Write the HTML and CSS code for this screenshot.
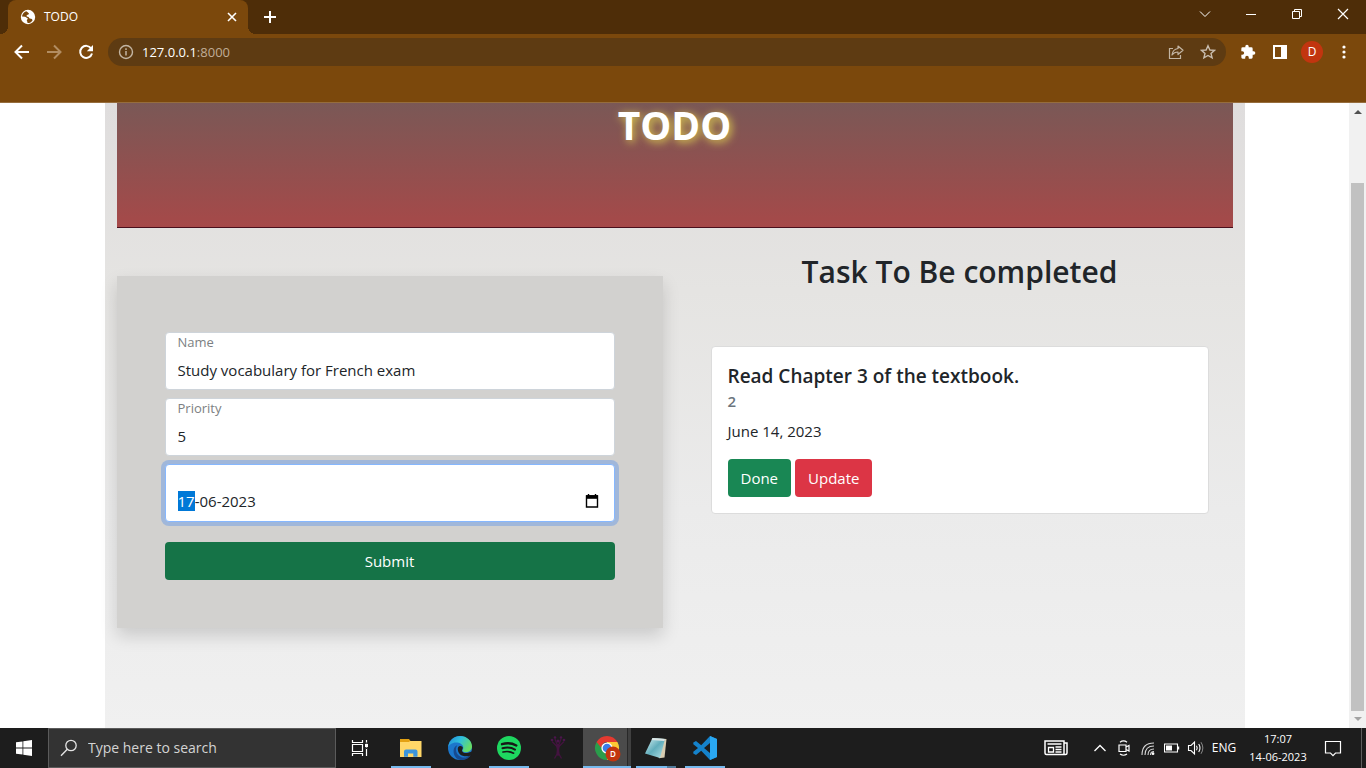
FILE: index.html
```html
<!DOCTYPE html>
<html lang="en">
<head>
<meta charset="utf-8">
<title>TODO</title>
<link rel="stylesheet" href="styles.css">
</head>
<body>
<header class="browser">
  <div class="tabstrip">
    <div class="tab">
      <svg class="tab-icon" width="16" height="16" viewBox="0 0 16 16"><circle cx="8" cy="8" r="7.2" fill="#fff"/><path d="M6.2 2.2C4 3 2.300 5 2 7.500l3 .3c1 .1 1.300 1 2.200 1.200.8.1.6 1.200 0 1.600-.6.5-.4 1.600.2 2.200L7.500 14c2 .1 4-1 5-2.600l-.5-1.500-2.200-.5c-.9-.2-.8-1.200-1.400-1.500-.6-.4-1.800-.1-1.800-1 0-.8.8-1.200 1.600-1.300 1-.1.8-1 .4-1.500-.5-.5-1.200-1.100-2.400-1.900z" fill="#7b480c"/><path d="M9 2.500l1.500 2.200 1.700.8.6-.8C12 3.500 10.500 2.600 9 2.500z" fill="#fff"/></svg>
      <span class="tab-title">TODO</span>
      <button class="tab-close" aria-label="Close tab"><svg width="10" height="10" viewBox="0 0 10 10"><path d="M1 1l8 8M9 1L1 9" stroke="#fff" stroke-width="1.600"/></svg></button>
    </div>
    <button class="new-tab" aria-label="New tab"><svg width="12" height="12" viewBox="0 0 12 12"><path d="M6 0v12M0 6h12" stroke="#fff" stroke-width="2"/></svg></button>
    <div class="window-controls">
      <button aria-label="Search tabs"><svg width="12" height="12" viewBox="0 0 12 12"><path d="M1 3.500l5 5 5-5" fill="none" stroke="#fff"/></svg></button>
      <button aria-label="Minimize"><svg width="12" height="12" viewBox="0 0 12 12"><path d="M1 6.500h10" stroke="#fff"/></svg></button>
      <button aria-label="Restore"><svg width="12" height="12" viewBox="0 0 12 12"><path d="M1.500 3.500h7v7h-7zM3.500 3.500v-2h7v7h-2" fill="none" stroke="#fff"/></svg></button>
      <button aria-label="Close"><svg width="12" height="12" viewBox="0 0 12 12"><path d="M1 1l10 10M11 1L1 11" stroke="#fff" stroke-width="1.200"/></svg></button>
    </div>
  </div>
  <div class="toolbar">
    <button class="tool" aria-label="Back"><svg width="16" height="16" viewBox="0 0 16 16"><path d="M15 8H2M8 1.500L1.500 8 8 14.500" fill="none" stroke="#fff" stroke-width="2"/></svg></button>
    <button class="tool" aria-label="Forward"><svg width="16" height="16" viewBox="0 0 16 16"><path d="M1 8h13M8 1.500L14.500 8 8 14.500" fill="none" stroke="#b28d62" stroke-width="2"/></svg></button>
    <button class="tool" aria-label="Reload"><svg width="16" height="16" viewBox="0 0 16 16"><path d="M13.200 4.500A6 6 0 1 0 14 9.500" fill="none" stroke="#fff" stroke-width="2"/><path d="M15 1v6.200H8.800z" fill="#fff"/></svg></button>
    <div class="omnibox">
      <svg width="16" height="16" viewBox="0 0 16 16"><circle cx="8" cy="8" r="6.500" fill="none" stroke="#c3b5a3" stroke-width="1.400"/><path d="M8 7v4.500M8 4.300v1.600" stroke="#c3b5a3" stroke-width="1.500"/></svg>
      <span class="url">127.0.0.1<span class="port">:8000</span></span>
      <button class="tool" aria-label="Share"><svg width="16" height="16" viewBox="0 0 16 16"><path d="M5 4.500H1.500v10h11V11" fill="none" stroke="#c3b5a3" stroke-width="1.200"/><path d="M10 2l5 4.300-5 4.200V8C7.500 8 5.500 8.800 4 11c.4-3.500 2.500-6 6-6.500z" fill="none" stroke="#c3b5a3" stroke-width="1.200" stroke-linejoin="round"/></svg></button>
      <button class="tool" aria-label="Bookmark"><svg width="16" height="16" viewBox="0 0 16 16"><path d="M8 1.800l1.900 4.200 4.600.4-3.500 3 1.100 4.500L8 11.500l-4.100 2.400L5 9.400l-3.500-3L6.100 6z" fill="none" stroke="#c9bdaf" stroke-width="1.400"/></svg></button>
    </div>
    <div class="actions">
      <button class="tool" aria-label="Extensions"><svg width="16" height="16" viewBox="0 0 24 24"><path d="M20.500 11H19V7a2 2 0 0 0-2-2h-4V3.500a2.500 2.500 0 0 0-5 0V5H4a2 2 0 0 0-2 2v3.800h1.500a2.700 2.700 0 0 1 0 5.400H2V20a2 2 0 0 0 2 2h3.800v-1.500a2.700 2.700 0 0 1 5.400 0V22H17a2 2 0 0 0 2-2v-4h1.500a2.500 2.500 0 0 0 0-5z" fill="#fff"/></svg></button>
      <button class="tool" aria-label="Side panel"><svg width="16" height="16" viewBox="0 0 16 16"><path d="M1 1h14v14H1zM3 3v10h6V3z" fill="#fff" fill-rule="evenodd"/></svg></button>
      <button class="tool" aria-label="Profile"><span class="avatar">D</span></button>
      <button class="tool" aria-label="Menu"><svg width="16" height="16" viewBox="0 0 16 16"><g fill="#fff"><circle cx="8" cy="3" r="1.600"/><circle cx="8" cy="8" r="1.600"/><circle cx="8" cy="13" r="1.600"/></g></svg></button>
    </div>
  </div>
  <div class="bookmarks"></div>
</header>

<div class="viewport">
  <main class="page">
    <div class="container">
      <div class="banner"><h1>TODO</h1></div>
      <div class="columns">
        <form class="task-form">
          <div class="field">
            <label for="name">Name</label>
            <input id="name" type="text" value="Study vocabulary for French exam">
          </div>
          <div class="field">
            <label for="priority">Priority</label>
            <input id="priority" type="text" value="5">
          </div>
          <div class="field field-active">
            <input id="date" type="text" value="17-06-2023" aria-label="Date">
            <button class="picker" type="button" aria-label="Show date picker"><svg width="16" height="16" viewBox="0 0 16 16"><path d="M4.500 1v2M11.500 1v2" stroke="#000" stroke-width="1.400"/><path d="M2.500 3h11v11h-11z" fill="none" stroke="#000" stroke-width="1.400"/><path d="M2 2.200h12v3.600H2z"/></svg></button>
          </div>
          <button class="btn btn-submit" type="submit">Submit</button>
        </form>
        <section class="tasks">
          <h2>Task To Be completed</h2>
          <article class="card">
            <h3>Read Chapter 3 of the textbook.</h3>
            <h4>2</h4>
            <p>June 14, 2023</p>
            <div class="card-actions">
              <button class="btn btn-done">Done</button>
              <button class="btn btn-update">Update</button>
            </div>
          </article>
        </section>
      </div>
    </div>
  </main>
  <div class="scrollbar">
    <svg width="17" height="17" viewBox="0 0 17 17"><path d="M5 11h8L9 7z" fill="#505050"/></svg>
    <div class="scroll-track"><div class="scroll-thumb"></div></div>
    <svg width="17" height="17" viewBox="0 0 17 17"><path d="M5 6h8L9 10z" fill="#a3a3a3"/></svg>
  </div>
</div>

<footer class="taskbar">
  <button class="start" aria-label="Start"><svg width="16" height="16" viewBox="0 0 16 16"><path d="M0 2.300L6.500 1.400v6.200H0zM7.300 1.200L16 0v7.600H7.300zM0 8.400h6.500v6.200L0 13.700zM7.300 8.400H16V16l-8.700-1.200z" fill="#fff"/></svg></button>
  <label class="search">
    <svg width="18" height="18" viewBox="0 0 18 18"><circle cx="11" cy="6.500" r="5.200" fill="none" stroke="#e4e4e4" stroke-width="1.300"/><path d="M7.300 10.200L1 16.800" stroke="#e4e4e4" stroke-width="1.400"/></svg>
    <input type="text" placeholder="Type here to search" aria-label="Search">
  </label>
  <button class="start" aria-label="Task view"><svg width="18" height="18" viewBox="0 0 18 18"><path d="M1.500 1v2.500h10V1M1.500 17v-2.500h10V17M1.500 5.500h10v7h-10zM15.500 1v16" fill="none" stroke="#fff" stroke-width="1.200"/><path d="M14 5h3v3h-3z" fill="#fff"/><path d="M15 3.500h1v1.200h-1zM15 8.500h1v1.500h-1z" fill="#1d1d1d"/></svg></button>
  <nav class="apps">
    <button class="app app-open" aria-label="File Explorer"><svg width="24" height="24" viewBox="0 0 24 24"><path d="M1 3h9l1.500 2H22v3H1z" fill="#e3a113"/><path d="M1 6h9l1-1h11.500v16H1z" fill="#ffd768"/><path d="M5 20.800v-5.300q0-2 2-2h9.500q2 0 2 2v5.300h-4.200v-3.400H9v3.400z" fill="#3b94dc"/></svg></button>
    <button class="app" aria-label="Edge"><svg width="24" height="24" viewBox="0 0 24 24"><defs><linearGradient id="eg" x1="0" y1="0" x2="1" y2=".5"><stop stop-color="#2388d8"/><stop offset=".5" stop-color="#2fc0dd"/><stop offset="1" stop-color="#67dd65"/></linearGradient></defs><circle cx="12" cy="12" r="12" fill="#1c77cc"/><path d="M.2 11C1 4.500 6 0 12.200 0 19 0 24 5 24 10.600c0 3.400-2.500 5.600-5.800 5.600-2.600 0-4-.8-3.700-2 .2-.7.8-1 .8-2.500C15.300 8.500 12 6.500 8 6.500 4 6.500 1 9 .2 11z" fill="url(#eg)"/><path d="M9.300 9.200c-2.300 3.300-1.500 8 1.700 10.500 3.500 2.600 7.500 2.400 10.400-.2.600-.5 1.200 0 .8.600-2 2.800-5.800 4.300-9.400 3.900C7.200 23.400 4.500 17 6 12.500c.6-1.700 1.800-2.700 3.300-3.300z" fill="#164b91"/><path d="M10 11.500c.7-1.600 3-2 4.300-.8 1.400 1.400-.6 3-.3 4.300.5 1.600 3 2.500 6.200 1.800l4.800-1.500-1.500 3.800c-3 1.800-9 1.700-11.600-.9-1.900-2-2.500-4.700-1.900-6.700z" fill="#1e1e1e"/></svg></button>
    <button class="app app-open" aria-label="Spotify"><svg width="24" height="24" viewBox="0 0 24 24"><circle cx="12" cy="12" r="12" fill="#1ed760"/><g fill="none" stroke="#171717" stroke-linecap="round"><path d="M5 8.200c5-1.500 10.500-.9 14.300 1.300" stroke-width="2.400"/><path d="M5.500 12.300c4.500-1.300 9-.7 12.500 1.300" stroke-width="2"/><path d="M6 16c4-1 7.500-.5 10.600 1.200" stroke-width="1.700"/></g></svg></button>
    <button class="app" aria-label="Family tree"><svg width="24" height="24" viewBox="0 0 24 24"><g fill="none" stroke="#43133f" stroke-width="1.300"><path d="M6 5.500l4.500 4.500q1.500 2 .5 8l-2.500 4.500M18 5.500L13.500 10q-1.500 2-.5 8l2.500 4.500M9 3l3 8 3-8M12 8v12"/></g><g fill="#4b154c"><circle cx="6" cy="4" r="1.300"/><circle cx="9" cy="1.500" r="1.300"/><circle cx="15" cy="1.500" r="1.300"/><circle cx="18" cy="4" r="1.300"/><circle cx="12" cy="5" r="1.500"/></g></svg></button>
    <button class="app app-current" aria-label="Chrome"><svg width="28" height="28" viewBox="0 0 28 28"><path d="M14 14L3.600 8A12 12 0 0 0 14 26l5-9z" fill="#2a9d4b"/><path d="M14 14l5 3-5 9A12 12 0 0 0 24.400 8H14z" fill="#fcc934"/><path d="M3.600 8A12 12 0 0 1 24.400 8H14c-3.500 0-5.500 2.700-5.600 6z" fill="#e53a30"/><circle cx="14" cy="14" r="5.600" fill="#fff"/><circle cx="14" cy="14" r="4.300" fill="#3b7de9"/><circle cx="20" cy="20" r="7.500" fill="#c2350f"/><text x="20" y="23" text-anchor="middle" class="badge-text">D</text></svg></button>
    <button class="app app-open app-stack" aria-label="Notepad"><svg width="24" height="24" viewBox="0 0 24 24"><defs><linearGradient id="ng" x1="0" y1="0" x2="1" y2="1"><stop stop-color="#d8f1f3"/><stop offset=".5" stop-color="#62aebc"/><stop offset="1" stop-color="#b5e3e8"/></linearGradient></defs><path d="M9 2l13.500 1-2 18.500-5.500.8z" fill="#d8cdb2"/><path d="M8.500 2l12.500 1-5 19L1 17.500z" fill="url(#ng)"/><path d="M8.500 2l12.500 1-.6 2L7.600 4z" fill="#dce5e6"/></svg></button>
    <button class="app app-open" aria-label="Visual Studio Code"><svg width="24" height="24" viewBox="0 0 24 24"><path d="M17 0l7 3v18l-7 3-8.800-9.200L3 19l-2.700-1.500v-1.700L5 12 .3 8.200V6.500L3 5l5.200 4.200zM17 7l-6 5 6 5z" fill="#1582cb" fill-rule="evenodd"/><path d="M17 0l7 3v18l-7 3z" fill="#2aa8f2"/></svg></button>
  </nav>
  <div class="tray">
    <button class="news" aria-label="News"><svg width="24" height="16" viewBox="0 0 24 16"><path d="M1 1h19v13.500H2.500Q1 14.500 1 13zM20 3h3v10q0 1.500-1.500 1.500H19" fill="none" stroke="#fff" stroke-width="1.500"/><path d="M3.500 4h14M11.500 7h6M11.500 9.500h6M11.500 12h6M4.500 7.500h5v4.500h-5z" fill="none" stroke="#fff" stroke-width="1.300"/></svg></button>
    <button class="tray-icon" aria-label="Show hidden icons"><svg width="14" height="14" viewBox="0 0 14 14"><path d="M1.500 10L7 4.500l5.500 5.500" fill="none" stroke="#fff" stroke-width="1.300"/></svg></button>
    <button class="tray-icon" aria-label="Meet Now"><svg width="16" height="16" viewBox="0 0 16 16"><path d="M3 5h7v6.500H3zM10 7l3-1.500v5.500l-3-1.500M4 2.200Q7.500-.5 11 2.200M4 14Q7.500 16.500 11 14" fill="none" stroke="#fff" stroke-width="1.200"/></svg></button>
    <button class="tray-icon" aria-label="Network"><svg width="16" height="16" viewBox="0 0 16 16"><g fill="none" stroke="#d8d8d8" stroke-width="1.100"><path d="M2 15Q2 3 14 3"/><path d="M5 15Q5 6 14 6"/><path d="M8 15Q8 9 14 9"/><path d="M10.500 15Q10.500 11.500 14 11.500"/></g><circle cx="13" cy="13.700" r="1.400" fill="#fff"/></svg></button>
    <button class="tray-icon" aria-label="Battery"><svg width="16" height="16" viewBox="0 0 16 16"><path d="M.5 4h13v8H.5z" fill="none" stroke="#fff" stroke-width="1.100"/><path d="M2 5.500h6v5H2zM14 6.500h1.200v3H14z" fill="#fff"/></svg></button>
    <button class="tray-icon" aria-label="Volume"><svg width="18" height="16" viewBox="0 0 18 16"><path d="M1.500 5.500h2.500l3.500-3.500v12L4 10.500H1.500z" fill="none" stroke="#fff" stroke-width="1.100"/><path d="M9.500 5.800q1.400 2.200 0 4.400M11.700 4q2.600 4 0 8" fill="none" stroke="#fff" stroke-width="1.100"/><path d="M14 2.200q3.700 5.800 0 11.600" fill="none" stroke="#8a8a8a"/></svg></button>
    <span class="lang">ENG</span>
    <div class="clock"><span>17:07</span><span>14-06-2023</span></div>
    <button class="notify" aria-label="Notifications"><svg width="18" height="18" viewBox="0 0 18 18"><path d="M1.500 2.500h15v11.500h-5l-2.500 2.700L6.500 14h-5z" fill="none" stroke="#fff" stroke-width="1.200"/></svg></button>
    <div class="peek"></div>
  </div>
</footer>
<script src="script.js"></script>
</body>
</html>
```
FILE: styles.css
```css
* { box-sizing: border-box; }

body {
  margin: 0;
  height: 100vh;
  display: flex;
  flex-direction: column;
  overflow: hidden;
  font-family: "Open Sans", "Noto Sans", sans-serif;
  font-size: 15px;
  line-height: 24px;
  color: #212529;
}

button, input { font: inherit; color: inherit; }
button { border: 0; padding: 0; background: none; }
svg { display: block; flex: none; }
h1, h2, h3, h4, p { margin: 0; }

/* Browser frame */
.browser {
  flex: none;
  background: #7b480c;
  border-bottom: 1px solid #966d3d;
  color: #fff;
  font-size: 12px;
}
.tabstrip {
  display: flex;
  height: 34px;
  padding-left: 8px;
  background: #4e2d08;
}
.tab {
  position: relative;
  display: flex;
  align-items: center;
  gap: 8px;
  width: 240px;
  padding: 0 11px 0 12px;
  background: #7b480c;
  border-radius: 8px 8px 0 0;
}
.tab::before, .tab::after {
  content: "";
  position: absolute;
  bottom: 0;
  width: 8px;
  height: 8px;
}
.tab::before { left: -8px; background: radial-gradient(circle at 0 0, #4e2d08 8px, #7b480c 8px); }
.tab::after { right: -8px; background: radial-gradient(circle at 100% 0, #4e2d08 8px, #7b480c 8px); }
.tab-title { flex: 1; }
.new-tab { width: 44px; display: grid; place-items: center; }
.window-controls { display: flex; margin-left: auto; }
.window-controls button { width: 46px; height: 28px; display: grid; place-items: center; }

.toolbar {
  display: flex;
  align-items: center;
  height: 36px;
  padding: 0 6px;
}
.tool { width: 32px; height: 28px; display: grid; place-items: center; }
.omnibox {
  flex: 1;
  display: flex;
  align-items: center;
  height: 28px;
  margin: 0 6px;
  padding: 0 2px 0 10px;
  border-radius: 14px;
  background: #5e3b12;
}
.url { flex: 1; padding-left: 8px; font-size: 13px; }
.port { color: #c0ad97; }
.actions { display: flex; }
.avatar {
  width: 22px;
  height: 22px;
  border-radius: 50%;
  background: #c2350f;
  font-size: 12px;
  line-height: 22px;
  text-align: center;
}
.bookmarks { height: 32px; }

/* Page */
.viewport { flex: 1; display: flex; min-height: 0; }
.page { flex: 1; background: #fff; }
.container {
  max-width: 1140px;
  height: 100%;
  margin: 0 auto;
  padding: 0 12px;
  background: linear-gradient(#dfdddd, #e5e4e2 30%, #ebebeb 65%, #f0f0f0);
}
.banner {
  height: 125px;
  border-bottom: 1px solid #4a0f1c;
  background: linear-gradient(#7a5856, #a64949);
  text-align: center;
}
h1 {
  font-size: 39px;
  font-weight: 700;
  line-height: 44px;
  color: #fff;
  text-shadow: 2px 2px 8px #ddd050;
}
.columns {
  display: grid;
  grid-template-columns: 1fr 1fr;
  gap: 24px;
  align-items: start;
}
.task-form {
  display: flex;
  flex-direction: column;
  gap: 8px;
  margin-top: 48px;
  padding: 56px 48px 48px;
  background: #d2d1cf;
  box-shadow: 0 8px 16px rgba(0, 0, 0, 0.15);
}
.field {
  display: grid;
  grid-template-columns: 1fr auto;
  align-content: space-between;
  height: 58px;
  padding: 0 12px 7px;
  border: 1px solid #ced4da;
  border-radius: 4px;
  background: #fff;
}
.field label {
  grid-column: 1 / -1;
  font-size: 13px;
  line-height: 18px;
  color: #7c7f82;
}
.field input {
  min-width: 0;
  height: 24px;
  padding: 0;
  border: 0;
  outline: 0;
  background: none;
}
.field-active {
  align-content: end;
  padding-bottom: 8px;
  border-color: #86b7fe;
  box-shadow: 0 0 0 4px #a0b7da;
}
.field-active input { line-height: 20px; }
.field-active input::selection { background: #0078d7; color: #fff; }
.picker { width: 20px; display: grid; place-items: center; }
.btn {
  height: 38px;
  padding: 0 13px;
  border-radius: 4px;
  color: #fff;
}
.btn-submit { margin-top: 12px; background: #157347; }

.tasks { padding: 24px 24px 0; }
h2 {
  margin-bottom: 54px;
  font-size: 30px;
  font-weight: 600;
  line-height: 40px;
  text-align: center;
}
.card {
  padding: 16px;
  border: 1px solid #dcdcdc;
  border-radius: 4px;
  background: #fff;
}
h3 { font-size: 19px; font-weight: 600; line-height: 26px; }
h4 { font-size: 15px; font-weight: 600; line-height: 24px; color: #6c757d; }
.card p { padding-top: 6px; }
.card-actions { display: flex; gap: 4px; margin-top: 16px; }
.btn-done { background: #198754; }
.btn-update { background: #dc3545; }

.scrollbar {
  flex: none;
  display: flex;
  flex-direction: column;
  width: 17px;
  background: #f1f1f1;
}
.scroll-track { flex: 1; padding: 63px 2px 0; }
.scroll-thumb { height: 100%; background: #c1c1c1; }

/* Taskbar */
.taskbar {
  flex: none;
  display: flex;
  height: 40px;
  background: #1d1d1d;
  color: #fff;
}
.start { width: 48px; display: grid; place-items: center; }
.search {
  display: flex;
  align-items: center;
  gap: 10px;
  width: 288px;
  padding: 0 11px;
  border: 1px solid #5b5b5b;
  background: #333;
}
.search input {
  flex: 1;
  min-width: 0;
  padding: 0;
  border: 0;
  background: none;
  font-size: 14px;
}
.search input::placeholder { color: #d4d4d4; }
.apps { display: flex; gap: 1px; margin-left: 3px; }
.app { position: relative; width: 48px; display: grid; place-items: center; }
.app-open::after, .app-current::after {
  content: "";
  position: absolute;
  bottom: 0;
  left: 4px;
  right: 4px;
  height: 2px;
  background: #76b9ed;
}
.app-current { background: linear-gradient(90deg, #4b4b4b 44px, #292929 44px, #292929 45px, #404040 45px); }
.app-current::after { left: 0; right: 0; }
.app-stack::after { background: linear-gradient(90deg, #76b9ed 31px, #527b9b 31px); }
.badge-text { font-size: 8px; font-weight: 600; fill: #fff; }
.tray { display: flex; align-items: center; margin-left: auto; font-size: 12px; }
.news { margin-right: 20px; }
.tray-icon { width: 24px; height: 40px; display: grid; place-items: center; }
.lang { width: 32px; text-align: center; }
.clock {
  display: flex;
  flex-direction: column;
  width: 76px;
  font-size: 11px;
  line-height: 18px;
  text-align: center;
}
.notify { width: 34px; height: 40px; display: grid; place-items: center; }
.peek { width: 5px; height: 40px; margin-left: 11px; border-left: 1px solid #5e5e5e; }
```
FILE: script.js
```js
const dateInput = document.getElementById("date");
dateInput.focus();
dateInput.setSelectionRange(0, 2);
```
